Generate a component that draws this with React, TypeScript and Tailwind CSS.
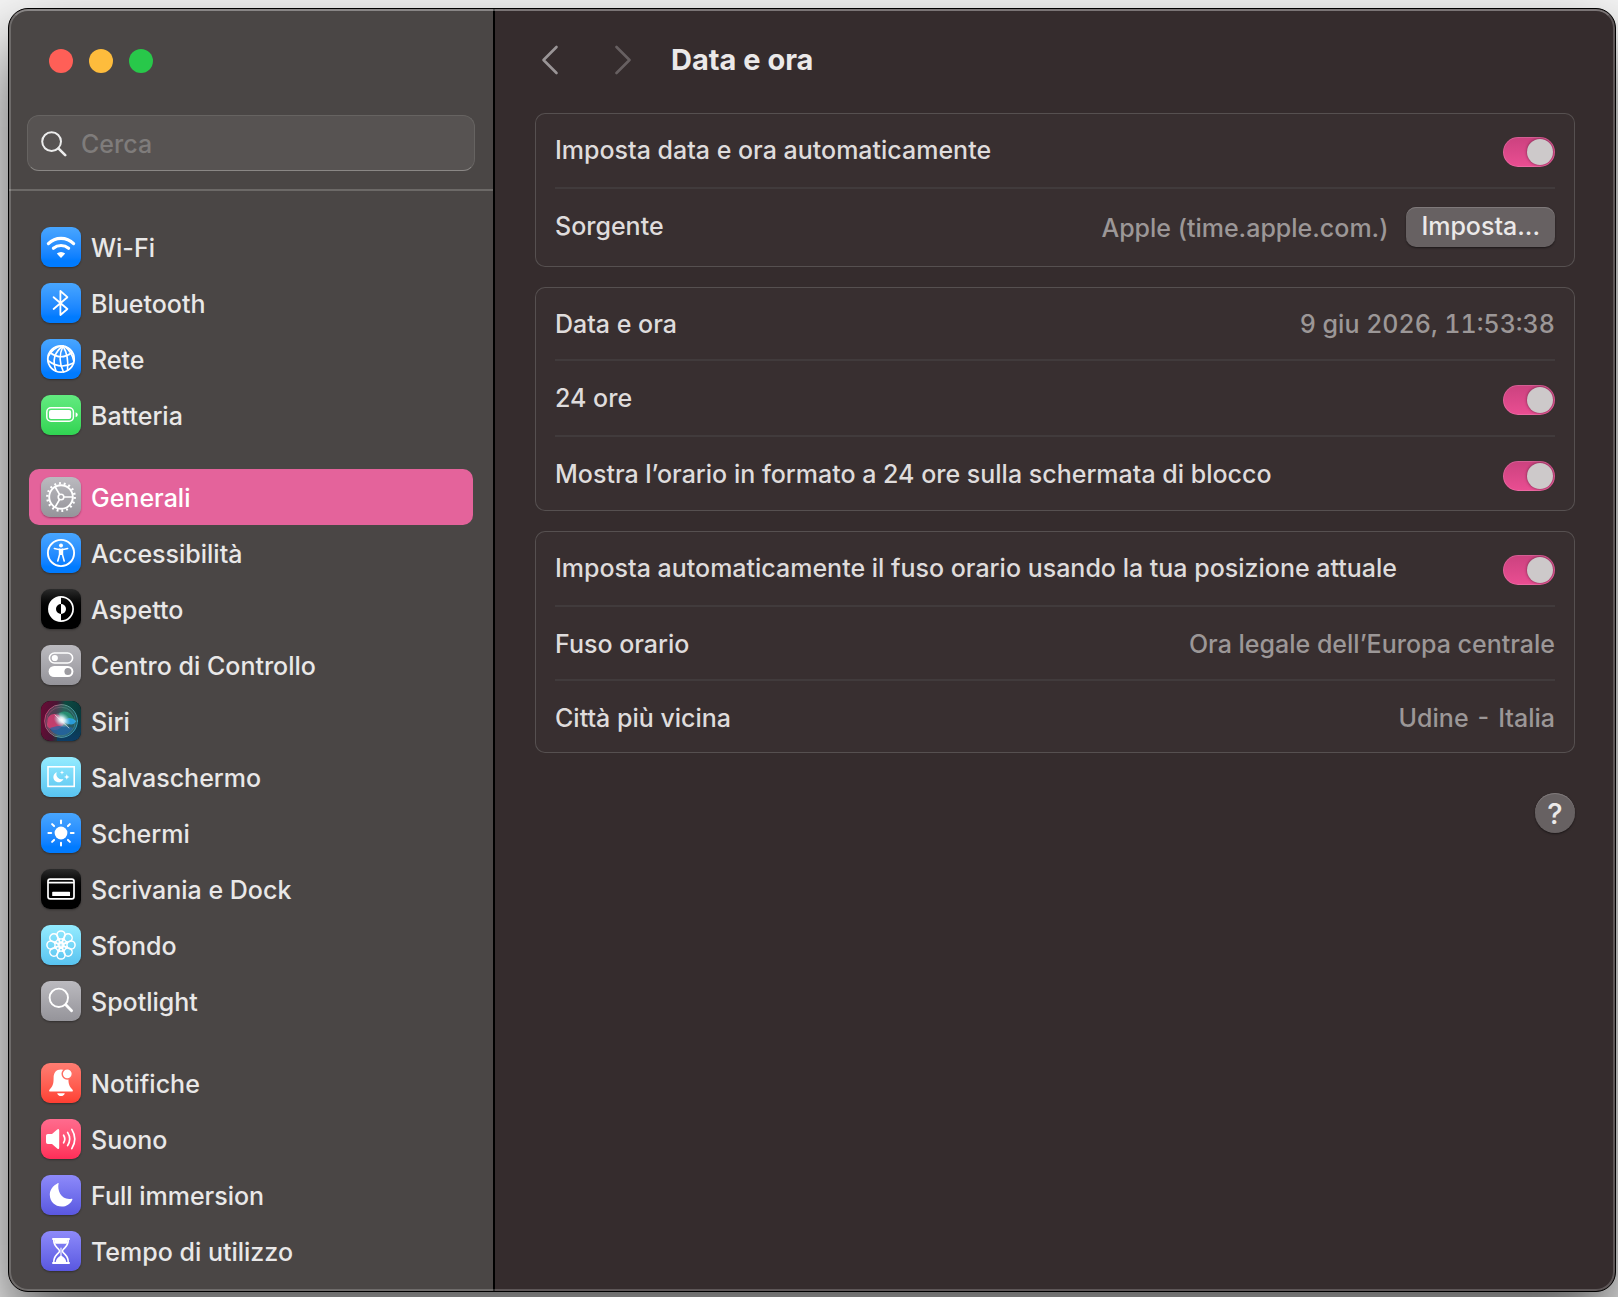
import { useId, useState } from "react";
import type { ReactNode } from "react";
import clsx from "clsx";

type Tint = "blue" | "green" | "gray" | "black" | "cyan" | "red" | "pink" | "indigo" | "none";

type NavItem = {
  label: string;
  tint: Tint;
  icon: ReactNode;
};

const TINTS: Record<Tint, string> = {
  blue: "from-[#48a6ff] to-[#007bff] to-85%",
  green: "from-[#62eb80] to-[#30d452]",
  gray: "from-[#bbbabf] to-[#95949a]",
  black: "from-[#2b2b2b] to-black to-60%",
  cyan: "from-[#94ecff] to-[#58c3f0]",
  red: "from-[#ff7d72] to-[#ff3e32]",
  pink: "from-[#ff6b8e] to-[#ff2c58]",
  indigo: "from-[#8e8afa] to-[#5a57e0]",
  none: "from-black to-black",
};

const EIGHTHS = [0, 45, 90, 135, 180, 225, 270, 315];

function WifiGlyph() {
  return (
    <>
      <path d="M7.4 16.6A18 18 0 0 1 32.6 16.6" strokeWidth="3.2" />
      <path d="M12.4 21.2A12 12 0 0 1 27.6 21.2" strokeWidth="3.2" />
      <path d="M20 31 15.8 26.6A6.2 6.2 0 0 1 24.2 26.6Z" fill="#fff" stroke="none" />
    </>
  );
}

function GlobeGlyph() {
  return (
    <g strokeWidth="1.6">
      <circle cx="20" cy="20" r="13.2" strokeWidth="1.8" />
      <path d="M9 13.5Q20 22 31 13.5" />
      <path d="M7 21.5Q19 31 32.5 24" />
      <path d="M22 7Q9 16 15 32" />
      <path d="M22 7Q16 20 22.5 33" />
      <path d="M22 7Q28 17 26.5 31" />
      <path d="M20 7Q12 9 7.5 17" />
      <path d="M24 7.5Q31 13 32.8 22" />
    </g>
  );
}

function BatteryGlyph() {
  return (
    <>
      <rect x="5.8" y="12.8" width="26.6" height="13.4" rx="4.2" strokeWidth="1.5" />
      <rect x="8" y="15" width="22.2" height="9" rx="2" fill="#fff" stroke="none" />
      <path d="M34.6 17.2Q36.8 17.8 36.8 19.7T34.6 22.2Z" fill="#fff" stroke="none" />
    </>
  );
}

function GearGlyph() {
  return (
    <>
      <circle cx="20" cy="20" r="11.8" strokeWidth="1.9" />
      <circle cx="20" cy="20" r="13.7" strokeWidth="2.4" strokeDasharray="1.9 2.88" strokeLinecap="butt" />
      <circle cx="20" cy="20" r="2.8" strokeWidth="1.6" />
      <path d="M23 20H31.5M18.5 17.4 14.2 10M18.5 22.6 14.2 30" strokeWidth="1.7" />
    </>
  );
}

function AccessibilityGlyph() {
  return (
    <>
      <circle cx="20" cy="20" r="13.1" strokeWidth="1.9" />
      <circle cx="20" cy="12.4" r="2" fill="#fff" stroke="none" />
      <path d="M13.4 15.6Q20 17.6 26.6 15.6" strokeWidth="1.6" />
      <path d="M18.6 16.4V21.4L16.8 28M21.4 16.4V21.4L23.2 28" strokeWidth="1.6" />
      <path d="M18 16.4H22V22H18Z" fill="#fff" stroke="none" />
    </>
  );
}

function AppearanceGlyph() {
  return (
    <>
      <circle cx="20" cy="20" r="12.1" strokeWidth="1.7" />
      <path d="M20 8A12 12 0 0 0 20 32V25A5 5 0 0 1 20 15Z" fill="#fff" stroke="none" />
      <path d="M20 15A5 5 0 0 1 20 25Z" fill="#fff" stroke="none" />
    </>
  );
}

function ControlCenterGlyph() {
  return (
    <>
      <rect x="8.4" y="8" width="23.2" height="10" rx="5" strokeWidth="1.6" />
      <circle cx="13.8" cy="13" r="3.1" fill="#fff" stroke="none" />
      <rect x="7.6" y="21" width="24.8" height="11" rx="5.5" fill="#fff" stroke="none" />
      <circle cx="26.9" cy="26.5" r="3.5" fill="#9c9ba0" stroke="none" />
    </>
  );
}

function SiriGlyph() {
  return (
    <>
      <defs>
        <linearGradient id="siri-base" x1="0" y1="0" x2="1" y2="0.15">
          <stop offset="0" stopColor="#6b0b35" />
          <stop offset="0.4" stopColor="#4a1534" />
          <stop offset="0.6" stopColor="#0d4a40" />
          <stop offset="1" stopColor="#0a3a3c" />
        </linearGradient>
        <linearGradient id="siri-low" x1="0" y1="0" x2="0" y2="1">
          <stop offset="0.4" stopColor="#0c3c66" stopOpacity="0" />
          <stop offset="1" stopColor="#0c3c66" />
        </linearGradient>
        <linearGradient id="siri-rim" x1="0" y1="0.3" x2="1" y2="0.6">
          <stop offset="0" stopColor="#e0487f" />
          <stop offset="0.5" stopColor="#79b0a4" />
          <stop offset="1" stopColor="#3fb4d8" />
        </linearGradient>
        <radialGradient id="siri-glow">
          <stop offset="0" stopColor="#fff" />
          <stop offset="0.35" stopColor="#e8fbff" stopOpacity="0.85" />
          <stop offset="1" stopColor="#a8e0ee" stopOpacity="0" />
        </radialGradient>
      </defs>
      <g stroke="none">
        <rect width="40" height="40" fill="url(#siri-base)" />
        <rect x="16" width="24" height="40" fill="url(#siri-low)" />
        <circle cx="20" cy="20" r="16" fill="#5b8f8c" opacity="0.35" />
        <path d="M6 24Q6 12 14 13T24 21Q19 30 13 29T6 24Z" fill="#e83f77" opacity="0.75" />
        <path d="M18 12Q29 7 34 20Q25 15 20 20Z" fill="#27b887" opacity="0.5" />
        <path d="M21 20Q29 14 35 20Q32 27 21 20Z" fill="#2aa7f0" opacity="0.85" />
        <path d="M9 27Q18 24 24 25T32 27Q27 35 19 34T9 27Z" fill="#2466a8" opacity="0.75" />
        <ellipse cx="21" cy="19" rx="9" ry="7" fill="url(#siri-glow)" transform="rotate(35 21 19)" />
      </g>
      <path d="M14 14 28 27" stroke="#fff" strokeWidth="1" opacity="0.6" />
      <circle cx="20" cy="20" r="16.4" stroke="url(#siri-rim)" strokeWidth="1" opacity="0.8" />
      <circle cx="20" cy="20.5" r="14.4" stroke="url(#siri-rim)" strokeWidth="0.6" opacity="0.6" />
    </>
  );
}

function ScreensaverGlyph() {
  return (
    <>
      <rect x="7" y="9.8" width="26.2" height="19.6" strokeWidth="1.6" strokeLinejoin="miter" />
      <path d="M15.8 15.2A5.2 5.2 0 1 0 22.4 22A5.2 5.2 0 0 1 15.8 15.2Z" fill="#fff" stroke="none" />
      <path d="M21 13.2 21.6 14.9 23.3 15.5 21.6 16.1 21 17.8 20.4 16.1 18.7 15.5 20.4 14.9Z" fill="#fff" stroke="none" />
      <path d="M25.8 17.2 26.6 19.2 28.6 20 26.6 20.8 25.8 22.8 25 20.8 23 20 25 19.2Z" fill="#fff" stroke="none" />
    </>
  );
}

function SunGlyph() {
  return (
    <>
      <circle cx="20" cy="20" r="6.4" fill="#fff" stroke="none" />
      {EIGHTHS.map((deg) => (
        <path key={deg} d="M20 10.2V7.4" strokeWidth="2" transform={`rotate(${deg} 20 20)`} />
      ))}
    </>
  );
}

function DockGlyph() {
  return (
    <>
      <rect x="7" y="10.1" width="26" height="19.8" rx="2.2" strokeWidth="1.7" />
      <path d="M7.5 13.6H32.5" strokeWidth="1.6" />
      <rect x="11.2" y="22.8" width="17.8" height="4.2" rx="0.6" fill="#fff" stroke="none" />
    </>
  );
}

function FlowerGlyph() {
  return (
    <g strokeWidth="1.5">
      {EIGHTHS.map((deg) => (
        <g key={deg} transform={`rotate(${deg} 20 20)`}>
          <circle cx="20" cy="10" r="4.1" />
          <path d="M18.2 13.6Q17.6 15.6 20 18Q22.4 15.6 21.8 13.6" />
        </g>
      ))}
      <circle cx="20" cy="20" r="1.4" strokeWidth="1" />
    </g>
  );
}

function SpotlightGlyph() {
  return (
    <>
      <circle cx="17.8" cy="16.8" r="9.2" strokeWidth="1.9" />
      <path d="M24.8 23.8 30.6 29.8" strokeWidth="2.8" />
    </>
  );
}

function BellGlyph() {
  return (
    <>
      <path
        d="M20 6.6C15 6.6 12.6 10 12.6 15C12.6 21.5 11.4 23.6 8.8 26.2C7.6 27.4 8 28.6 9.4 28.6H30.6C32 28.6 32.4 27.4 31.2 26.2C28.6 23.6 27.4 21.5 27.4 15C27.4 10 25 6.6 20 6.6Z"
        fill="#fff"
        stroke="none"
      />
      <path d="M16.2 30.2H23.8Q23 33 20 33T16.2 30.2Z" fill="#fff" stroke="none" />
      <circle cx="26.3" cy="10.8" r="5.1" fill="#fff" stroke="#ff6f64" strokeWidth="1.5" />
    </>
  );
}

function SoundGlyph() {
  return (
    <>
      <path
        d="M6.8 15H11L16.2 10.4Q18.2 9 18.2 11.4V28.6Q18.2 31 16.2 29.6L11 25H6.8Q5 25 5 23.2V16.8Q5 15 6.8 15Z"
        fill="#fff"
        stroke="none"
      />
      <path d="M22.6 16.2Q25 20 22.6 23.8" strokeWidth="1.7" />
      <path d="M26.6 13.4Q30.8 20 26.6 26.6" strokeWidth="1.7" />
      <path d="M30.8 10.4Q36.8 20 30.8 29.6" strokeWidth="1.7" />
    </>
  );
}

function MoonGlyph() {
  return (
    <path
      d="M17.6 8.6C16 16 20.4 25.6 30.6 23.8C31.4 23.7 31.6 24.2 31.2 25C29.4 29 25.4 31.6 20.8 31.6C14 31.6 8.8 26.6 8.8 19.8C8.8 14.8 11.8 10.6 16.4 8.4C17.2 8 17.7 8 17.6 8.6Z"
      fill="#fff"
      stroke="none"
    />
  );
}

function HourglassGlyph() {
  return (
    <>
      <path
        d="M12.8 8H27.2Q27.6 13 24 16.6Q21.4 19 21.4 20T24 23.4Q27.6 27 27.2 32H12.8Q12.4 27 16 23.4Q18.6 21 18.6 20T16 16.6Q12.4 13 12.8 8Z"
        strokeWidth="1.6"
      />
      <path d="M12 8H28M12 32H28" strokeWidth="2" />
      <path d="M13.4 8.6H26.6Q26.6 11 25.6 12.8H14.4Q13.4 11 13.4 8.6Z" fill="#fff" stroke="none" />
      <path d="M20 24.6Q24.6 26.6 25.4 31.4H14.6Q15.4 26.6 20 24.6Z" fill="#fff" stroke="none" />
      <path d="M20 17V25" strokeWidth="1.1" />
    </>
  );
}

const NAV_GROUPS: NavItem[][] = [
  [
    { label: "Wi-Fi", tint: "blue", icon: <WifiGlyph /> },
    {
      label: "Bluetooth",
      tint: "blue",
      icon: <path d="M12.6 14.2 26.4 26 19.4 32V8L26.4 14.2 12.6 26" strokeWidth="1.8" />,
    },
    { label: "Rete", tint: "blue", icon: <GlobeGlyph /> },
    { label: "Batteria", tint: "green", icon: <BatteryGlyph /> },
  ],
  [
    { label: "Generali", tint: "gray", icon: <GearGlyph /> },
    { label: "Accessibilità", tint: "blue", icon: <AccessibilityGlyph /> },
    { label: "Aspetto", tint: "black", icon: <AppearanceGlyph /> },
    { label: "Centro di Controllo", tint: "gray", icon: <ControlCenterGlyph /> },
    { label: "Siri", tint: "none", icon: <SiriGlyph /> },
    { label: "Salvaschermo", tint: "cyan", icon: <ScreensaverGlyph /> },
    { label: "Schermi", tint: "blue", icon: <SunGlyph /> },
    { label: "Scrivania e Dock", tint: "black", icon: <DockGlyph /> },
    { label: "Sfondo", tint: "cyan", icon: <FlowerGlyph /> },
    { label: "Spotlight", tint: "gray", icon: <SpotlightGlyph /> },
  ],
  [
    { label: "Notifiche", tint: "red", icon: <BellGlyph /> },
    { label: "Suono", tint: "pink", icon: <SoundGlyph /> },
    { label: "Full immersion", tint: "indigo", icon: <MoonGlyph /> },
    { label: "Tempo di utilizzo", tint: "indigo", icon: <HourglassGlyph /> },
  ],
];

function SidebarLink({ item, active, onSelect }: { item: NavItem; active: boolean; onSelect: () => void }) {
  return (
    <a
      href="#"
      onClick={(e) => {
        e.preventDefault();
        onSelect();
      }}
      aria-current={active ? "page" : undefined}
      className={clsx(
        "flex h-14 items-center gap-2.5 rounded-[10px] pl-3",
        active ? "bg-[#e4639b] text-white" : "text-[#e9e8e8]",
      )}
    >
      <span
        className={clsx(
          "size-10 shrink-0 overflow-hidden rounded-[9px] bg-linear-to-b shadow-[0_1px_2px_rgba(0,0,0,0.35)]",
          TINTS[item.tint],
        )}
      >
        <svg
          viewBox="0 0 40 40"
          className="size-10"
          fill="none"
          stroke="#fff"
          strokeLinecap="round"
          strokeLinejoin="round"
          aria-hidden="true"
        >
          {item.icon}
        </svg>
      </span>
      <span className="pt-0.5">{item.label}</span>
    </a>
  );
}

function Sidebar() {
  const [selected, setSelected] = useState("Generali");

  return (
    <aside className="w-[486px] shrink-0 border-r-2 border-black bg-[#4a4645] pb-3">
      <div className="border-b-2 border-[#6c6967] px-[18px] pt-10 pb-[18px]">
        <div className="flex gap-4 pl-[22px]">
          <button type="button" aria-label="Chiudi" className="size-6 rounded-full bg-[#ff5f57]" />
          <button type="button" aria-label="Riduci" className="size-6 rounded-full bg-[#febc3c]" />
          <button type="button" aria-label="Ingrandisci" className="size-6 rounded-full bg-[#28c84a]" />
        </div>
        <label className="mt-[42px] flex h-14 items-center gap-[14px] rounded-xl border border-[#666361] border-b-[#8a8785] bg-[#575352] pt-0.5 pl-[13px]">
          <svg viewBox="0 0 26 26" className="size-[26px] shrink-0" fill="none" stroke="#ececec" strokeLinecap="round" aria-hidden="true">
            <circle cx="10.6" cy="10.6" r="9.4" strokeWidth="2" />
            <path d="M17.4 17.4 24.2 24.2" strokeWidth="2.6" />
          </svg>
          <input
            type="text"
            placeholder="Cerca"
            aria-label="Cerca"
            className="min-w-0 flex-1 bg-transparent text-[#e9e8e8] outline-none placeholder:text-[#7f7c7b]"
          />
        </label>
      </div>

      <nav className="flex flex-col gap-[26px] px-5 pt-7">
        {NAV_GROUPS.map((group) => (
          <ul key={group[0].label}>
            {group.map((item) => (
              <li key={item.label}>
                <SidebarLink
                  item={item}
                  active={item.label === selected}
                  onSelect={() => setSelected(item.label)}
                />
              </li>
            ))}
          </ul>
        ))}
      </nav>
    </aside>
  );
}

function Card({ children }: { children: ReactNode }) {
  return (
    <section className="divide-y-2 divide-[#413b3c] rounded-[10px] bg-[#382f30] px-5 inset-ring inset-ring-[#565050]">
      {children}
    </section>
  );
}

function ValueRow({ label, value }: { label: string; value: string }) {
  return (
    <div className="flex h-[72px] items-center justify-between gap-4 box-content">
      <span className="pt-0.5">{label}</span>
      <span className="pt-0.5 text-[#9c9797] tabular-nums">{value}</span>
    </div>
  );
}

function ToggleRow({ label }: { label: string }) {
  const id = useId();
  const [on, setOn] = useState(true);

  return (
    <div className="flex h-[74px] items-center justify-between gap-4 box-content">
      <label htmlFor={id}>{label}</label>
      <input
        id={id}
        type="checkbox"
        role="switch"
        checked={on}
        onChange={(e) => setOn(e.target.checked)}
        className="mt-1 flex h-[30px] w-[52px] shrink-0 appearance-none items-center rounded-full bg-[#5a5354] px-0.5 inset-ring inset-ring-white/15 before:size-[26px] before:rounded-full before:bg-[#cdc9ca] before:shadow-[0_0_3px_rgba(0,0,0,0.5)] checked:justify-end checked:bg-linear-to-b checked:from-[#cb427f] checked:to-[#ea4e92]"
      />
    </div>
  );
}

export default function App() {
  return (
    <div className="flex min-h-screen overflow-hidden bg-[#f6f6f6] pt-2 pr-0.5 pb-[5px] pl-2 font-['Inter','Liberation_Sans',sans-serif] text-[25px] leading-8 font-medium">
      <div className="relative flex flex-1 overflow-hidden rounded-[20px] border border-black bg-[#352c2d] shadow-[0_36px_70px_rgba(0,0,0,0.65)]">
        <Sidebar />

        <main className="min-w-0 flex-1 px-10 text-[#dfdcdc]">
          <header className="flex h-[104px] items-center pb-0.5">
            <button type="button" aria-label="Indietro" className="ml-1.5">
              <svg viewBox="0 0 18 30" className="h-[30px] w-[18px]" fill="none" stroke="#9a9596" strokeWidth="2.6" strokeLinecap="round" strokeLinejoin="round">
                <path d="M15.5 2 2.5 15 15.5 28" />
              </svg>
            </button>
            <button type="button" aria-label="Avanti" disabled className="ml-[54px]">
              <svg viewBox="0 0 18 30" className="h-[30px] w-[18px]" fill="none" stroke="#676061" strokeWidth="2.6" strokeLinecap="round" strokeLinejoin="round">
                <path d="M3.5 2 16.5 15 3.5 28" />
              </svg>
            </button>
            <h1 className="ml-10 text-[29px] font-bold text-[#ebe9e9]">Data e ora</h1>
          </header>

          <div className="flex flex-col gap-5">
            <Card>
              <ToggleRow label="Imposta data e ora automaticamente" />
              <div className="box-content flex h-[76px] items-center gap-[18px] pb-0.5">
                <span className="flex-1 pb-0.5">Sorgente</span>
                <span className="pt-0.5 text-[#9c9797]">Apple (time.apple.com.)</span>
                <button
                  type="button"
                  className="h-10 rounded-[10px] bg-[#676162] px-[15px] pb-0.5 text-[#ebe9e9] shadow-[inset_0_1px_0_#7f797a,0_1px_2px_rgba(0,0,0,0.5)]"
                >
                  Imposta...
                </button>
              </div>
            </Card>

            <Card>
              <ValueRow label="Data e ora" value="9 giu 2026, 11:53:38" />
              <ToggleRow label="24 ore" />
              <ToggleRow label="Mostra l’orario in formato a 24 ore sulla schermata di blocco" />
            </Card>

            <Card>
              <ToggleRow label="Imposta automaticamente il fuso orario usando la tua posizione attuale" />
              <ValueRow label="Fuso orario" value="Ora legale dell’Europa centrale" />
              <ValueRow label="Città più vicina" value="Udine - Italia" />
            </Card>
          </div>

          <div className="mt-10 flex justify-end">
            <button
              type="button"
              aria-label="Aiuto"
              className="size-10 rounded-full bg-[#676162] pt-0.5 text-[29px] text-[#ebe9e9] shadow-[inset_0_1px_0_#7f797a,0_1px_2px_rgba(0,0,0,0.5)]"
            >
              ?
            </button>
          </div>
        </main>

        {/* light bevel along the window edge */}
        <div className="pointer-events-none absolute inset-0 rounded-[19px] border-2 border-white/20 border-t-white/35" />
      </div>
    </div>
  );
}
